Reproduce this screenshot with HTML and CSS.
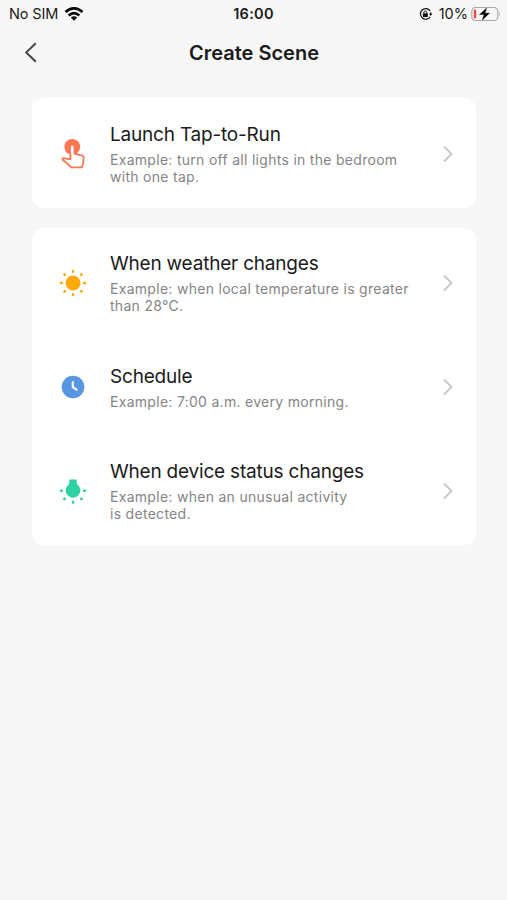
FILE: index.html
```html
<!DOCTYPE html>
<html lang="en">
<head>
<meta charset="utf-8">
<title>Create Scene</title>
<link rel="stylesheet" href="styles.css">
</head>
<body>
<div class="status">
  <div class="status-left">
    <span class="carrier">No SIM</span>
    <svg class="wifi" width="20" height="15" viewBox="0 0 20 15" fill="none" stroke="#080808" stroke-width="2.7"><path d="M1.5 5.1Q10-2.3 18.5 5.1M4.7 8.5Q10 3.8 15.3 8.5"/><path d="M6.8 10.5Q10 7.9 13.2 10.5L10 13.7Z" fill="#080808" stroke="none"/></svg>
  </div>
  <span class="time">16:00</span>
  <div class="status-right">
    <svg class="lock" width="14" height="14" viewBox="0 0 14 14" fill="none" stroke="#111" stroke-width="1.2"><path d="M11.2 4A5.3 5.3 0 1 0 11.3 9.7M11.7 5.3V8"/><path d="M10 6.7h3.4l-1.7 2.4z" fill="#111" stroke="none"/><rect x="3.9" y="6.3" width="4.9" height="3.7" rx=".5" fill="#111" stroke="none"/><path d="M4.9 6.5V5.4a1.45 1.45 0 0 1 2.9 0v1.1" stroke-width="1"/></svg>
    <span class="percent">10%</span>
    <svg class="battery" width="31" height="16" viewBox="0 0 31 16"><rect x=".8" y="1.5" width="26" height="13" rx="3.8" fill="none" stroke="#a9a9a9" stroke-width="1.2"/><path d="M28.3 5.5q1.8 2.3 0 4.8z" fill="#a9a9a9"/><rect x="2.8" y="3.6" width="2.4" height="8.8" rx="1" fill="#f34a40"/><path d="M16.4.8L7.6 8.9h4.9L10.3 15.4l9.2-8.7h-4.9z" fill="#050505" stroke="#f8f8f8" stroke-width=".5"/></svg>
  </div>
</div>
<header class="header">
  <svg class="back" width="14" height="22" viewBox="0 0 14 22" fill="none" stroke="#444" stroke-width="2"><path d="M11.8 1.2L2.2 10.4l9.6 9.4"/></svg>
  <h1 class="heading">Create Scene</h1>
</header>
<main class="cards">
  <section class="card">
    <div class="row row-low">
      <svg class="icon" width="30" height="32" viewBox="0 0 30 32"><circle cx="14.2" cy="8.8" r="7.9" fill="#fc7651"/><path d="M12.5 9.6a1.75 1.75 0 0 1 3.5 0v6l8.4 2.1q1.4.4 1.3 1.9l-.7 6.5-1.4 3.2H13.2L9 25.4 4.6 21.7q-.5-1.3 1.2-1.5l6.7 1.1z" fill="#fff" stroke="#fc7651" stroke-width="1.8" stroke-linejoin="round"/><path d="M12.9 8.9a1.35 1.35 0 0 1 2.7 0v7h-2.7z" fill="#fff"/></svg>
      <div class="text">
        <h2 class="title">Launch Tap-to-Run</h2>
        <p class="desc">Example: turn off all lights in the bedroom<br>with one tap.</p>
      </div>
      <svg class="chevron" width="12" height="18" viewBox="0 0 12 18"><path d="M2 1.5L9.5 9 2 16.5"/></svg>
    </div>
  </section>
  <section class="card">
    <div class="row">
      <svg class="icon" width="30" height="32" viewBox="0 0 30 32" fill="#ffa90b"><circle cx="15" cy="16" r="7.5"/><g stroke="#ffa90b" stroke-width="2.5" stroke-linecap="round"><path d="M15 4v.8M15 27.2v.8M3 16h.8M26.2 16h.8M6.4 7.4l.5.5M23.1 24.1l.5.5M6.4 24.6l.5-.5M23.1 7.9l.5-.5"/></g></svg>
      <div class="text">
        <h2 class="title">When weather changes</h2>
        <p class="desc">Example: when local temperature is greater<br>than 28°C.</p>
      </div>
      <svg class="chevron" width="12" height="18" viewBox="0 0 12 18"><path d="M2 1.5L9.5 9 2 16.5"/></svg>
    </div>
    <div class="row row-short">
      <svg class="icon" width="30" height="32" viewBox="0 0 30 32"><circle cx="15" cy="16" r="11.3" fill="#5796e1"/><path d="M14.8 11v5.2l3.8 2.5" fill="none" stroke="#fff" stroke-width="2.2" stroke-linecap="round" stroke-linejoin="round"/></svg>
      <div class="text">
        <h2 class="title">Schedule</h2>
        <p class="desc">Example: 7:00 a.m. every morning.</p>
      </div>
      <svg class="chevron" width="12" height="18" viewBox="0 0 12 18"><path d="M2 1.5L9.5 9 2 16.5"/></svg>
    </div>
    <div class="row row-low">
      <svg class="icon" width="30" height="32" viewBox="0 0 30 32" fill="#2ed2a2"><path d="M11.2 5.2q0-.7.8-.7h6q.8 0 .8.7v3.7a7.4 7.4 0 1 1-7.6 0z"/><g stroke="#2ed2a2" stroke-width="2.5" stroke-linecap="round"><path d="M3 15.7h.8M26.2 15.7h.8M6.3 24.2l.5-.5M23.2 23.7l.5.5M15 26.8v.8"/></g></svg>
      <div class="text">
        <h2 class="title">When device status changes</h2>
        <p class="desc">Example: when an unusual activity<br>is detected.</p>
      </div>
      <svg class="chevron" width="12" height="18" viewBox="0 0 12 18"><path d="M2 1.5L9.5 9 2 16.5"/></svg>
    </div>
  </section>
</main>
</body>
</html>
```
FILE: styles.css
```css
* { box-sizing: border-box; }
body {
  margin: 0;
  min-height: 900px;
  background: #f7f7f7;
  color: #1b1b1b;
  font-family: Inter, "Liberation Sans", sans-serif;
}
h1, h2, p { margin: 0; }
svg { display: block; flex: none; }
.status {
  display: grid;
  grid-template-columns: 1fr auto 1fr;
  align-items: center;
  height: 28px;
  padding: 0 5px 0 9px;
  font-size: 14.5px;
}
.status-left, .status-right { display: flex; align-items: center; }
.status-left { gap: 6px; }
.carrier { letter-spacing: -0.15px; }
.status-right { justify-content: flex-end; }
.percent { margin: 0 3px 0 6px; }
.time { margin-right: 4px; font-weight: 600; letter-spacing: 0.3px; }
.carrier, .time, .percent { line-height: 16px; padding-bottom: 1px; }
.header {
  display: grid;
  grid-template-columns: 60px 1fr 60px;
  align-items: center;
  height: 50px;
}
.back { margin-left: 24px; }
.heading {
  padding-left: 1px;
  font-size: 20px;
  font-weight: 600;
  line-height: 24px;
  text-align: center;
}
.cards {
  display: flex;
  flex-direction: column;
  gap: 20px;
  padding: 20px 31px 0 32px;
}
.card { background: #fff; border-radius: 12px; }
.row {
  display: flex;
  align-items: center;
  height: 110px;
  padding: 0 22px 0 26px;
}
.row-short { height: 97px; }
.row-low { padding-top: 2px; }
.text { flex: 1; margin-left: 22px; padding-bottom: 1px; white-space: nowrap; }
.row-short .text { padding: 1px 0 0; }
.title {
  padding-top: 1px;
  font-size: 19px;
  font-weight: 400;
  line-height: 24px;
  letter-spacing: -0.2px;
}
.desc {
  margin-top: 4px;
  color: #858585;
  font-size: 14px;
  line-height: 17px;
  letter-spacing: 0.29px;
}
.chevron { fill: none; stroke: #c6c6c6; stroke-width: 1.8; }
```
